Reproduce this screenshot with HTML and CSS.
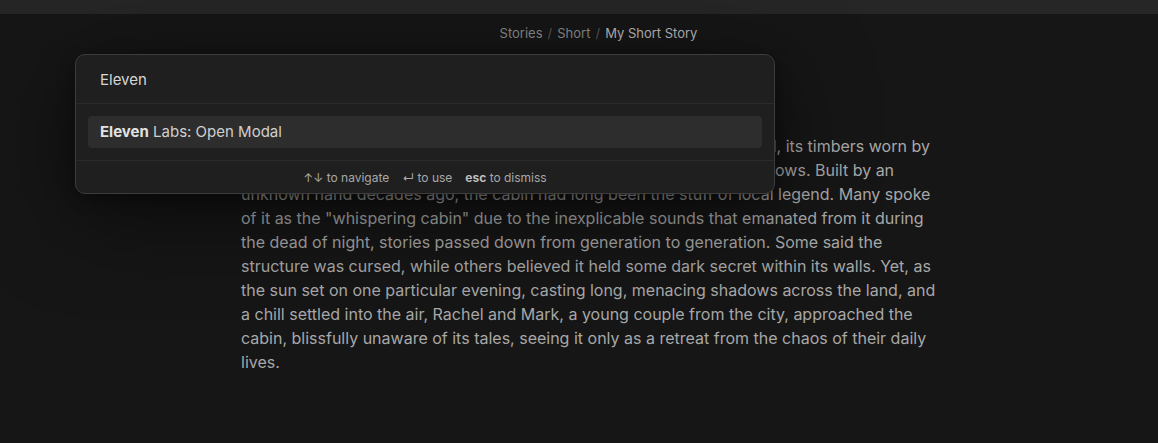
FILE: index.html
```html
<!DOCTYPE html>
<html>
<head>
<meta charset="utf-8">
<link rel="stylesheet" href="styles.css">
</head>
<body>
<div class="app">
  <div class="titlebar"></div>
  <div class="view">
    <div class="crumbs">
      <span class="crumb">Stories</span><span class="sep">/</span><span class="crumb">Short</span><span class="sep">/</span><span class="crumb current">My Short Story</span>
    </div>
    <div class="doc">
      <h1 class="doc-title">My Short Story</h1>
      <p class="doc-text">Nestled deep within the dense, whispering spruces, an old cabin stood, its timbers worn by the passage of time and its cracked windows veiled in deepening shadows. Built by an unknown hand decades ago, the cabin had long been the stuff of local legend. Many spoke of it as the "whispering cabin" due to the inexplicable sounds that emanated from it during the dead of night, stories passed down from generation to generation. Some said the structure was cursed, while others believed it held some dark secret within its walls. Yet, as the sun set on one particular evening, casting long, menacing shadows across the land, and a chill settled into the air, Rachel and Mark, a young couple from the city, approached the cabin, blissfully unaware of its tales, seeing it only as a retreat from the chaos of their daily lives.</p>
    </div>
  </div>
  <div class="palette">
    <div class="palette-input">Eleven</div>
    <div class="palette-results">
      <div class="result selected"><b>Eleven</b> Labs: Open Modal</div>
    </div>
    <div class="palette-footer">
      <span class="hint">↑↓ to navigate</span>
      <span class="hint">↵ to use</span>
      <span class="hint"><b class="key">esc</b> to dismiss</span>
    </div>
  </div>
</div>
</body>
</html>
```

FILE: styles.css
```css
html, body {
  margin: 0;
  padding: 0;
  background: #161616;
  font-family: Inter, "Noto Sans", sans-serif;
}

.app {
  position: relative;
  width: 1158px;
  height: 443px;
  overflow: hidden;
  background: #161616;
}

.titlebar {
  height: 14px;
  background: #262626;
}

.view {
  display: flex;
  flex-direction: column;
}

.crumbs {
  display: flex;
  justify-content: center;
  align-items: center;
  padding-left: 39px;
  height: 38px;
  font-size: 13px;
  color: #8a8a8a;
}

.sep {
  color: #555;
  margin: 0 5px;
}

.crumb.current {
  color: #b8b8b8;
}

.doc {
  padding-left: 241px;
  width: 700px;
}

.doc-title {
  margin: 40px 0 0;
  height: 42px;
  font-size: 26px;
  font-weight: 700;
  color: #d8d8d8;
  line-height: 42px;
}

.doc-text {
  margin: 0;
  font-size: 16px;
  line-height: 24px;
  color: #a8a8a8;
}

.palette {
  position: absolute;
  left: 75px;
  top: 54px;
  width: 698px;
  border: 1px solid #3c3c3c;
  border-radius: 10px;
  background: #1f1f1f;
  box-shadow: 0 20px 90px rgba(0, 0, 0, 0.55), 0 4px 16px rgba(0, 0, 0, 0.35);
  overflow: hidden;
}

.palette-input {
  height: 47px;
  padding-top: 1px;
  line-height: 48px;
  padding-left: 24px;
  font-size: 15px;
  color: #d6d6d6;
  border-bottom: 1px solid #2a2a2a;
}

.palette-results {
  padding: 12px;
  border-bottom: 1px solid #2a2a2a;
}

.result {
  height: 32px;
  line-height: 32px;
  padding-left: 12px;
  border-radius: 4px;
  font-size: 15px;
  color: #cfcfcf;
}

.result b {
  color: #e2e2e2;
  font-weight: 700;
}

.result.selected {
  background: #2d2d2d;
}

.palette-footer {
  height: 32px;
  display: flex;
  justify-content: center;
  align-items: center;
  gap: 13px;
  font-size: 12px;
  color: #a8a8a8;
}

.key {
  color: #bdbdbd;
  font-weight: 700;
}
```
